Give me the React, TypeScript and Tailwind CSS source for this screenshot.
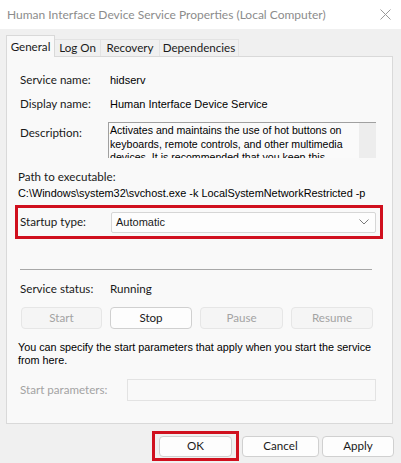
import * as React from "react";

const ui = { fontFamily: 'Lato, "Noto Sans", sans-serif' };
const classic = { fontFamily: '"Liberation Sans", Arial, sans-serif' };

function Tab({ label, active, className }: { label: string; active?: boolean; className?: string }) {
  if (active) {
    return (
      <div
        className={`relative z-10 -mb-px flex h-[22px] items-center justify-center border border-b-0 border-[#d9d9d9] bg-[#f9f9f9] ${className ?? ""}`}
      >
        {label}
      </div>
    );
  }
  return (
    <div
      className={`flex h-[17px] items-center justify-center border-t border-r border-[#e3e3e3] bg-[#f0f0f0] ${className ?? ""}`}
    >
      {label}
    </div>
  );
}

function Btn({
  children,
  disabled,
  className,
}: {
  children: React.ReactNode;
  disabled?: boolean;
  className?: string;
}) {
  return (
    <div
      className={`flex items-center justify-center rounded-[4px] border ${
        disabled
          ? "border-[#e6e6e6] bg-[#f5f5f5] text-[#a3a3a3]"
          : "border-[#d0d0d0] bg-[#fdfdfd] text-[#1a1a1a]"
      } ${className ?? ""}`}
    >
      {children}
    </div>
  );
}

export default function App() {
  return (
    <div
      className="flex h-[463px] w-[401px] flex-col overflow-hidden bg-[#f0f0f0] text-[11.6px] text-[#1a1a1a]"
      style={ui}
    >
      {/* title bar */}
      <div className="flex h-[29px] shrink-0 items-center justify-between bg-white pl-[7px] pr-[10px]">
        <span className="text-[12px] text-[#8c8c8c]">
          Human Interface Device Service Properties (Local Computer)
        </span>
        <svg width="11" height="11" viewBox="0 0 11 11" className="text-[#9a9a9a]">
          <path d="M0.5 0.5 L10.5 10.5 M10.5 0.5 L0.5 10.5" stroke="currentColor" strokeWidth="1" />
        </svg>
      </div>

      {/* tabs */}
      <div className="ml-[6px] mt-[6px] flex items-end">
        <Tab label="General" active className="w-[49px]" />
        <Tab label="Log On" className="w-[46px]" />
        <Tab label="Recovery" className="w-[59px]" />
        <Tab label="Dependencies" className="w-[79px]" />
      </div>

      {/* panel */}
      <div className="ml-[6px] flex h-[368px] w-[387px] flex-col border border-[#d9d9d9] bg-[#f9f9f9]">
        <div className="ml-[13px] mt-[15px] flex h-[16px] items-center">
          <span className="w-[90px]">Service name:</span>
          <span className="text-[11px] text-black" style={classic}>
            hidserv
          </span>
        </div>
        <div className="ml-[13px] mt-[8px] flex h-[16px] items-center">
          <span className="w-[90px]">Display name:</span>
          <span className="text-[11px] text-black" style={classic}>
            Human Interface Device Service
          </span>
        </div>

        <div className="ml-[13px] mt-[10px] flex">
          <span className="w-[88px] pt-[4px] leading-[14px]">Description:</span>
          <div className="flex h-[36px] w-[268px] overflow-hidden border-t border-l border-[#a0a0a0] bg-[#fafafa]">
            <div
              className="flex-1 pl-[1px] pt-[1px] text-[10.6px] leading-[13.5px] text-black"
              style={classic}
            >
              Activates and maintains the use of hot buttons on keyboards, remote controls, and other multimedia
              devices. It is recommended that you keep this service running.
            </div>
            <div className="w-[17px] bg-[#ededed]" />
          </div>
        </div>

        <div className="ml-[11px] mt-[11px] flex h-[16px] items-center">Path to executable:</div>
        <div className="ml-[11px] flex h-[16px] items-center text-[10.9px] text-black" style={classic}>
          C:\Windows\system32\svchost.exe -k LocalSystemNetworkRestricted -p
        </div>

        {/* startup type, highlighted */}
        <div className="ml-[8px] mt-[4px] flex h-[34px] w-[368px] items-center border-[3px] border-[#d0101e] pl-[2px] pr-[4px]">
          <span className="w-[91px]">Startup type:</span>
          <div className="flex h-[21px] flex-1 items-center justify-between rounded-[2px] border border-[#d6d6d6] bg-[#fdfdfd] pl-[4px] pr-[6px]">
            <span className="text-[11px]" style={classic}>
              Automatic
            </span>
            <svg width="10" height="6" viewBox="0 0 10 6" className="text-[#7a7a7a]">
              <path d="M0.5 0.5 L5 5 L9.5 0.5" fill="none" stroke="currentColor" strokeWidth="1" />
            </svg>
          </div>
        </div>

        <div className="ml-[13px] mt-[30px] h-px w-[352px] bg-[#a8a8a8]" />

        <div className="ml-[13px] mt-[11px] flex h-[16px] items-center">
          <span className="w-[90px]">Service status:</span>
          <span>Running</span>
        </div>

        <div className="ml-[14px] mt-[10px] flex gap-[8px]">
          <Btn disabled className="h-[22px] w-[81px]">
            Start
          </Btn>
          <Btn className="h-[22px] w-[82px]">Stop</Btn>
          <Btn disabled className="h-[22px] w-[83px]">
            Pause
          </Btn>
          <Btn disabled className="h-[22px] w-[82px]">
            Resume
          </Btn>
        </div>

        <p
          className="ml-[11px] mt-[12px] w-[364px] text-[10.8px] leading-[13px] text-black"
          style={classic}
        >
          You can specify the start parameters that apply when you start the service from here.
        </p>

        <div className="ml-[13px] mt-[12px] flex items-center">
          <span className="w-[107px] text-[#a3a3a3]">Start parameters:</span>
          <div className="h-[22px] w-[249px] border border-[#e3e3e3] bg-[#f9f9f9]" />
        </div>
      </div>

      {/* dialog buttons */}
      <div className="mt-[7px] flex items-center pl-[152px]">
        <div className="flex h-[30px] w-[87px] items-center justify-center border-[3px] border-[#d0101e]">
          <Btn className="h-[21px] w-[73px]">OK</Btn>
        </div>
        <Btn className="ml-[3px] h-[21px] w-[77px]">Cancel</Btn>
        <Btn className="ml-[3px] h-[21px] w-[72px]">Apply</Btn>
      </div>
    </div>
  );
}
